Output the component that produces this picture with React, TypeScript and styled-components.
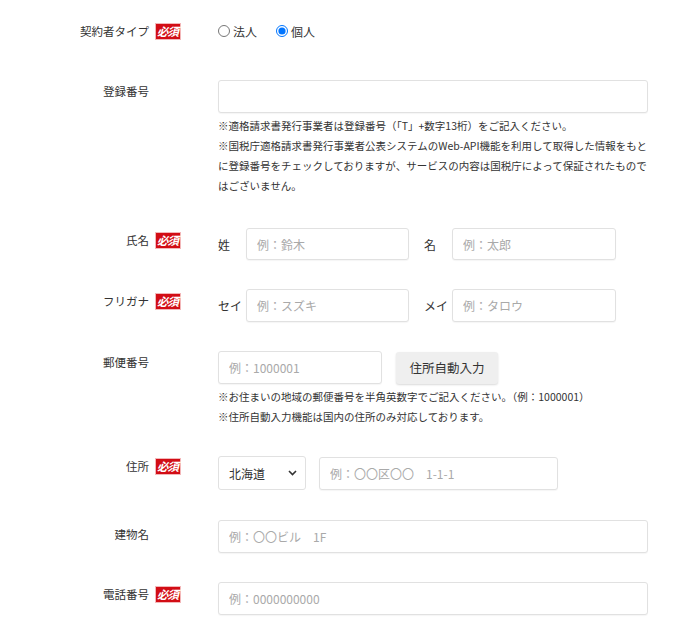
import React from "react";
import styled, { createGlobalStyle } from "styled-components";

const GlobalStyle = createGlobalStyle`
  body {
    margin: 0;
    background: #fff;
    color: #333;
    font-family: "Noto Sans CJK JP", "Noto Sans", sans-serif;
  }
`;

const Form = styled.form`
  display: flex;
  flex-direction: column;
  padding: 20px 0 0;
  width: 700px;
`;

const Row = styled.div<{ $gap?: number }>`
  display: grid;
  grid-template-columns: 181px 430px;
  column-gap: 37px;
  margin-bottom: ${(p) => p.$gap ?? 29}px;
`;

const Label = styled.div<{ $pad?: number }>`
  display: flex;
  justify-content: flex-end;
  align-items: center;
  gap: 6px;
  padding-top: ${(p) => p.$pad ?? 3}px;
  height: 17px;
  font-size: 11.5px;
  line-height: 17px;
  color: #333;
  white-space: nowrap;
`;

const Badge = styled.span<{ $hidden?: boolean }>`
  display: inline-flex;
  align-items: center;
  justify-content: center;
  width: 26px;
  height: 17px;
  box-sizing: border-box;
  background: #d20d15;
  border: 1px solid #f3b7b9;
  color: #fff;
  font-size: 11.5px;
  font-style: italic;
  font-weight: bold;
  letter-spacing: -1px;
  padding-right: 1px;
  visibility: ${(p) => (p.$hidden ? "hidden" : "visible")};
`;

const Field = styled.div`
  display: flex;
  flex-direction: column;
`;

const Line = styled.div`
  display: flex;
  align-items: center;
`;

const RadioGroup = styled.div`
  display: flex;
  align-items: center;
  gap: 19px;
  height: 22px;
  font-size: 12px;
`;

const RadioLabel = styled.label`
  display: flex;
  align-items: center;
  gap: 1px;
  input {
    margin: 0 2px 0 0;
    width: 12px;
    height: 12px;
  }
`;

const TextInput = styled.input<{ $w?: number; $h?: number }>`
  box-sizing: border-box;
  width: ${(p) => (p.$w ? `${p.$w}px` : "100%")};
  height: ${(p) => p.$h ?? 33}px;
  border: 1px solid #e1e1e1;
  border-radius: 3px;
  padding: 0 10px;
  font-family: inherit;
  font-size: 12px;
  color: #333;
  background: #fff;
  box-shadow: 0 1px 1px rgba(0, 0, 0, 0.04);
  &::placeholder {
    color: #a9a9a9;
  }
`;

const SubLabel = styled.span`
  width: 28px;
  flex-shrink: 0;
  font-size: 12px;
`;

const Pair = styled.div`
  display: flex;
  align-items: center;
  margin-right: 15px;
`;

const Notes = styled.div`
  margin-top: 3px;
  font-size: 10.5px;
  line-height: 20px;
  color: #333;
`;

const Button = styled.button`
  margin-left: 14px;
  width: 102px;
  height: 32px;
  border: none;
  border-radius: 3px;
  background: #efefef;
  box-shadow: 0 1px 2px rgba(0, 0, 0, 0.15);
  font-family: inherit;
  font-size: 12.5px;
  color: #333;
`;

const SelectWrap = styled.div`
  position: relative;
  margin-right: 13px;
`;

const Select = styled.select`
  appearance: none;
  box-sizing: border-box;
  width: 88px;
  height: 34px;
  padding: 0 10px;
  border: 1px solid #e1e1e1;
  border-radius: 3px;
  background: #fff;
  font-family: inherit;
  font-size: 12px;
  color: #333;
`;

const Chevron = styled.svg`
  position: absolute;
  right: 9px;
  top: 14px;
  pointer-events: none;
`;

function Req({ on }: { on?: boolean }) {
  return <Badge $hidden={!on}>必須</Badge>;
}

export default function App() {
  return (
    <>
      <GlobalStyle />
      <Form>
        <Row $gap={38}>
          <Label $pad={3}>
            契約者タイプ
            <Req on />
          </Label>
          <RadioGroup>
            <RadioLabel>
              <input type="radio" name="type" />
              法人
            </RadioLabel>
            <RadioLabel>
              <input type="radio" name="type" defaultChecked />
              個人
            </RadioLabel>
          </RadioGroup>
        </Row>

        <Row $gap={32}>
          <Label>
            登録番号
            <Req />
          </Label>
          <Field>
            <TextInput />
            <Notes>
              ※適格請求書発行事業者は登録番号（「T」+数字13桁）をご記入ください。
              <br />
              ※国税庁適格請求書発行事業者公表システムのWeb-API機能を利用して取得した情報をもとに登録番号をチェックしておりますが、サービスの内容は国税庁によって保証されたものではございません。
            </Notes>
          </Field>
        </Row>

        <Row>
          <Label $pad={4}>
            氏名
            <Req on />
          </Label>
          <Line>
            <Pair>
              <SubLabel>姓</SubLabel>
              <TextInput $w={163} $h={32} placeholder="例：鈴木" />
            </Pair>
            <Pair>
              <SubLabel>名</SubLabel>
              <TextInput $w={164} $h={32} placeholder="例：太郎" />
            </Pair>
          </Line>
        </Row>

        <Row>
          <Label $pad={4}>
            フリガナ
            <Req on />
          </Label>
          <Line>
            <Pair>
              <SubLabel>セイ</SubLabel>
              <TextInput $w={163} placeholder="例：スズキ" />
            </Pair>
            <Pair>
              <SubLabel>メイ</SubLabel>
              <TextInput $w={164} placeholder="例：タロウ" />
            </Pair>
          </Line>
        </Row>

        <Row $gap={29}>
          <Label>
            郵便番号
            <Req />
          </Label>
          <Field>
            <Line>
              <TextInput $w={164} placeholder="例：1000001" />
              <Button type="button">住所自動入力</Button>
            </Line>
            <Notes>
              ※お住まいの地域の郵便番号を半角英数字でご記入ください。（例：1000001）
              <br />
              ※住所自動入力機能は国内の住所のみ対応しております。
            </Notes>
          </Field>
        </Row>

        <Row $gap={30}>
          <Label $pad={2}>
            住所
            <Req on />
          </Label>
          <Line>
            <SelectWrap>
              <Select defaultValue="北海道">
                <option>北海道</option>
                <option>青森県</option>
              </Select>
              <Chevron width="9" height="6" viewBox="0 0 9 6">
                <path d="M1 1l3.5 3.5L8 1" fill="none" stroke="#333" strokeWidth="1.6" />
              </Chevron>
            </SelectWrap>
            <TextInput $w={239} placeholder="例：〇〇区〇〇　1-1-1" />
          </Line>
        </Row>

        <Row>
          <Label $pad={6}>
            建物名
            <Req />
          </Label>
          <TextInput placeholder="例：〇〇ビル　1F" />
        </Row>

        <Row>
          <Label $pad={4}>
            電話番号
            <Req on />
          </Label>
          <TextInput placeholder="例：0000000000" />
        </Row>
      </Form>
    </>
  );
}
